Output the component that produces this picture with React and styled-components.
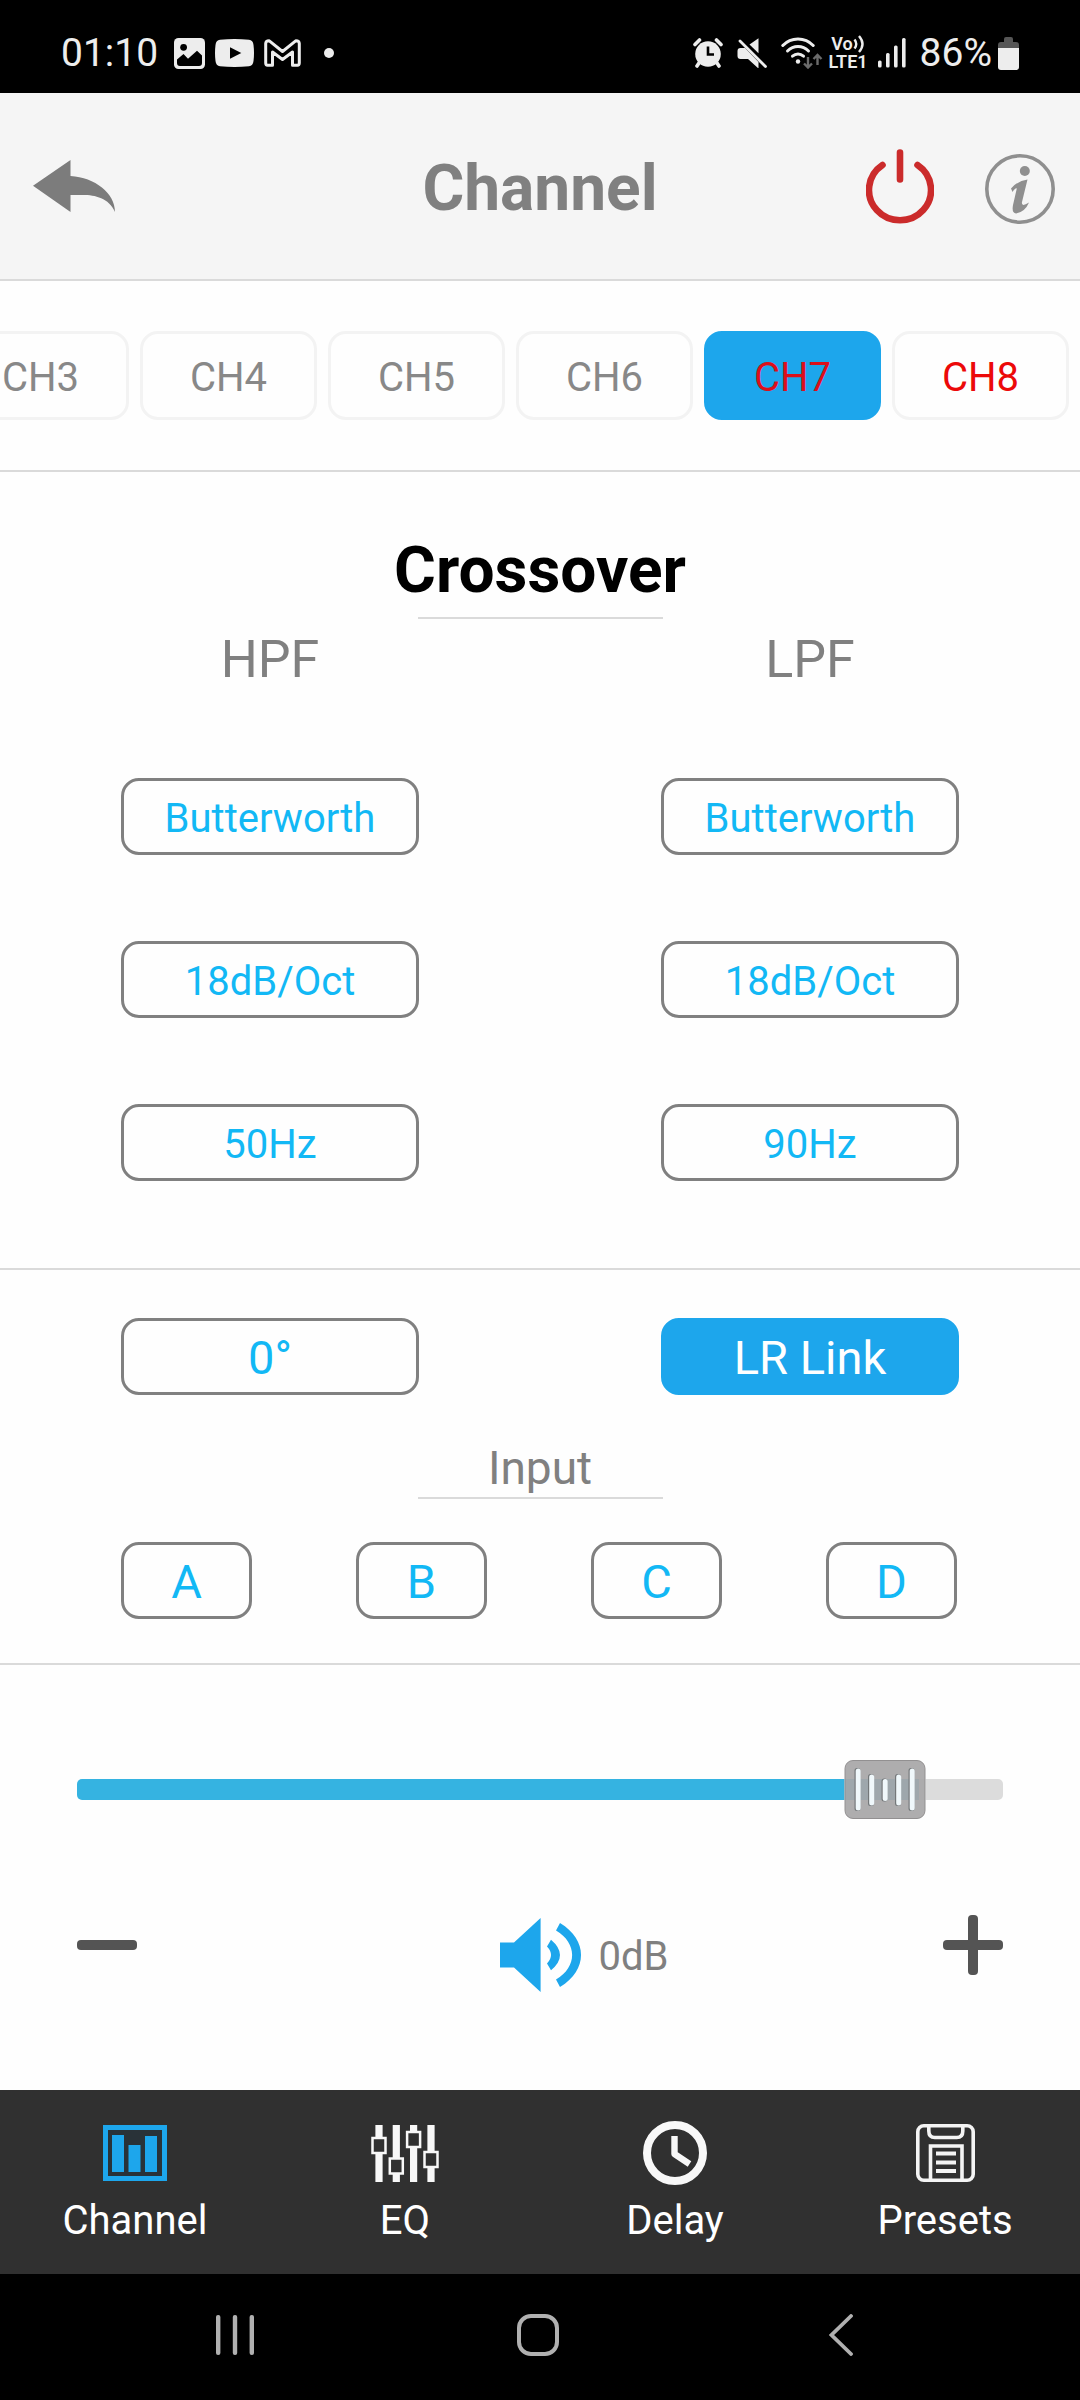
import React, { useState } from 'react';
import styled, { createGlobalStyle, css } from 'styled-components';

const GlobalStyle = createGlobalStyle`
  * {
    box-sizing: border-box;
  }
  body {
    margin: 0;
    background: #fefefe;
    font-family: Roboto, "Liberation Sans", sans-serif;
  }
  button {
    padding: 0;
    border: none;
    background: none;
    font-family: inherit;
    cursor: pointer;
  }
  svg {
    display: block;
    flex-shrink: 0;
  }
`;

const colors = {
  accent: '#1da6ec',
  link: '#12b8f5',
  track: '#35b3e1',
  grey: '#808080',
  line: '#dadada',
  status: '#ededed',
  bar: '#303030',
};

const Page = styled.div`
  display: flex;
  flex-direction: column;
  min-height: 100vh;
`;

const StatusBar = styled.div`
  display: flex;
  justify-content: space-between;
  padding: 13px 61px 0;
  height: 93px;
  background: #000;
  color: ${colors.status};
  font-size: 39px;
`;

const StatusGroup = styled.div`
  display: flex;
  align-items: center;
  gap: ${(props) => props.$gap};
`;

const VoLte = styled.div`
  display: flex;
  flex-direction: column;
  align-items: center;
  margin: 0 -4px 0 -9px;
  font-size: 18px;
  font-weight: 600;
  line-height: 18px;

  span {
    display: flex;
    align-items: center;
  }
`;

const Battery = styled.span`
  display: flex;
  align-items: center;
  gap: 6px;
`;

const Header = styled.header`
  display: grid;
  grid-template-columns: 1fr auto 1fr;
  align-items: center;
  padding: 0 25px;
  height: 188px;
  border-bottom: 2px solid ${colors.line};
  background: #f5f5f5;
`;

const Title = styled.h1`
  margin: 0;
  padding-top: 6px;
  color: ${colors.grey};
  font-size: 64px;
  line-height: 74px;
`;

const HeaderActions = styled.div`
  display: flex;
  align-items: center;
  justify-content: flex-end;
  gap: 51px;
`;

const IconButton = styled.button`
  display: flex;
`;

const BackButton = styled(IconButton)`
  padding-left: 8px;
`;

const ChannelTabs = styled.nav`
  display: flex;
  justify-content: flex-end;
  gap: 11px;
  padding: 50px 11px;
  overflow: hidden;
  border-bottom: 2px solid ${colors.line};
`;

const Tab = styled.button`
  flex: 0 0 177px;
  height: 89px;
  padding-top: 3px;
  border: 3px solid #f3f3f3;
  border-radius: 18px;
  color: ${(props) => (props.$linked ? '#ec0909' : '#888')};
  font-size: 40px;

  ${(props) =>
    props.$active &&
    css`
      border-color: ${colors.accent};
      background: ${colors.accent};
      color: #dc0f1b;
    `}
`;

const Section = styled.section`
  padding: ${(props) => props.$padding};
  border-bottom: 2px solid ${colors.line};
`;

const SectionTitle = styled.h2`
  display: flex;
  justify-content: center;
  width: 245px;
  margin: 0 auto;
  padding-bottom: 9px;
  border-bottom: 2px solid ${colors.line};
  color: #000;
  font-size: 64px;
  line-height: 74px;
`;

const InputTitle = styled(SectionTitle)`
  margin: 45px auto 43px;
  padding-bottom: 1px;
  color: ${colors.grey};
  font-size: 46px;
  font-weight: 400;
  line-height: 56px;
`;

const Columns = styled.div`
  display: grid;
  grid-template-columns: 1fr 1fr;
`;

const Filter = styled.div`
  display: flex;
  flex-direction: column;
  align-items: center;
  gap: 86px;
  padding-top: 8px;
`;

const FilterName = styled.h3`
  margin: 0;
  color: ${colors.grey};
  font-size: 52px;
  font-weight: 400;
  line-height: 65px;
`;

const Option = styled.button`
  width: 298px;
  height: 77px;
  padding-top: ${(props) => (props.$large ? '2px' : '4px')};
  justify-self: center;
  border: 3px solid ${colors.grey};
  border-radius: 18px;
  color: ${colors.link};
  font-size: ${(props) => (props.$large ? '47px' : '40px')};

  ${(props) =>
    props.$active &&
    css`
      border-color: ${colors.accent};
      background: ${colors.accent};
      color: #fff;
    `}
`;

const Inputs = styled.div`
  display: flex;
  justify-content: space-between;
  padding: 0 123px 0 121px;
`;

const InputOption = styled(Option)`
  width: 131px;
`;

const Volume = styled.section`
  flex: 1;
  padding: 95px 77px 80px;
`;

const SliderBox = styled.div`
  position: relative;
  height: 59px;
`;

const Range = styled.input`
  display: block;
  width: 100%;
  height: 59px;
  margin: 0;
  appearance: none;
  background: transparent;

  &::-webkit-slider-runnable-track {
    height: 21px;
    border-radius: 5px;
    background: linear-gradient(
      to right,
      ${colors.track} var(--filled),
      #dcdcdc var(--filled)
    );
  }
  &::-webkit-slider-thumb {
    appearance: none;
    width: 82px;
    height: 59px;
    margin-top: -19px;
    background: transparent;
  }
`;

const Knob = styled.svg`
  position: absolute;
  top: 0;
  pointer-events: none;
`;

const VolumeControls = styled.div`
  display: grid;
  grid-template-columns: 1fr auto 1fr;
  align-items: start;
  justify-items: start;
  margin-top: 96px;
`;

const SpeakerButton = styled(IconButton)`
  align-items: center;
  height: 80px;
`;

const LevelBox = styled.div`
  display: flex;
  align-items: flex-start;
  justify-content: space-between;
  justify-self: stretch;
  padding-left: 18px;
`;

const Level = styled.output`
  color: ${colors.grey};
  font-size: 40px;
  line-height: 84px;
`;

const TabBar = styled.nav`
  display: grid;
  grid-template-columns: repeat(4, 1fr);
  padding: 31px 0 29px;
  background: ${colors.bar};
`;

const TabLink = styled.a`
  display: flex;
  flex-direction: column;
  align-items: center;
  gap: 12px;
  color: #fff;
  font-size: 40px;
  line-height: 48px;
  text-decoration: none;
`;

const TabIcon = styled.span`
  display: flex;
  align-items: center;
  height: 64px;
`;

const SystemBar = styled.div`
  display: grid;
  grid-template-columns: repeat(3, 1fr);
  justify-items: center;
  padding: 0 88px 0 84px;
  height: 126px;
  background: #000;
`;

const SystemButton = styled(IconButton)`
  align-items: center;
  padding-bottom: 4px;
`;

const ImageIcon = () => (
  <svg width="31" height="31" viewBox="0 0 31 31">
    <rect width="31" height="31" rx="4.5" fill={colors.status} />
    <circle cx="9.6" cy="9.3" r="3.4" />
    <path d="M3 21.5L9.5 16l4.5 4.7 9-8 5 4.8V25a3 3 0 0 1-3 3H6a3 3 0 0 1-3-3z" />
  </svg>
);

const VideoIcon = () => (
  <svg width="39" height="28" viewBox="0 0 39 28">
    <path
      d="M5 .8Q19.5-.8 34 .8 38 1.2 38.5 6 39.5 14 38.5 22 38 26.8 34 27.2 19.5 28.8 5 27.2 1 26.8.5 22-.5 14 .5 6 1 1.2 5 .8z"
      fill={colors.status}
    />
    <path d="M15 8.3v11.4L26.3 14z" />
  </svg>
);

const MailIcon = () => (
  <svg width="37" height="28" viewBox="0 0 37 28">
    <path
      d="M3.5 26.2H8.5V13L18.5 20.5 28.5 13V26.2H33.5Q35.3 26.2 35.3 24V4.5Q35.3 1.7 32 1.7L18.5 12.5 5 1.7Q1.7 1.7 1.7 4.5V24Q1.7 26.2 3.5 26.2z"
      fill="none"
      stroke={colors.status}
      strokeWidth="3"
      strokeLinejoin="round"
    />
  </svg>
);

const DotIcon = () => (
  <svg width="10" height="10" viewBox="0 0 10 10">
    <circle cx="5" cy="5" r="5" fill={colors.status} />
  </svg>
);

const AlarmIcon = () => (
  <svg width="30" height="30" viewBox="0 0 30 30">
    <circle cx="15" cy="16" r="12.8" fill={colors.status} />
    <path
      d="M2 6.5L6.5 2M28 6.5L23.5 2M6 25l-2 3M24 25l2 3"
      stroke={colors.status}
      strokeWidth="3.6"
      strokeLinecap="round"
    />
    <path d="M15 8.5v8h6" fill="none" stroke="#000" strokeWidth="2.6" />
  </svg>
);

const MuteIcon = () => (
  <svg width="30" height="30" viewBox="0 0 30 30" fill={colors.status}>
    <path d="M.5 13q0-3 3-3H8l13.5 14v6.5L11 21H3.5q-3 0-3-3z" />
    <path d="M12.5 6.5L21.5.3v15z" />
    <path
      d="M3 3l25.5 25.5"
      stroke={colors.status}
      strokeWidth="2.8"
      strokeLinecap="round"
    />
  </svg>
);

const WifiIcon = () => (
  <svg width="42" height="32" viewBox="0 0 42 32" fill="none">
    <g stroke={colors.status} strokeWidth="3" strokeLinecap="round">
      <path d="M1.8 8.5Q8 2 17 2T32.2 8.5" />
      <path d="M6.5 14Q11 9.5 17 9.5T27.5 14" />
      <path d="M11.5 19.2Q14 17 17 17T22.5 19.2" />
    </g>
    <circle cx="17" cy="24.5" r="2.2" fill={colors.status} />
    <path
      d="M27 20v10M23 26.5l4 4 4-4M36.5 28V18M32.5 22l4-4 4 4"
      stroke="#6b6b6b"
      strokeWidth="2.4"
    />
  </svg>
);

const WaveIcon = () => (
  <svg width="12" height="18" viewBox="0 0 12 18" fill="none">
    <path
      d="M1.5 4.5q3.5 4.5 0 9M6 1q7 8 0 16"
      stroke={colors.status}
      strokeWidth="2.4"
    />
  </svg>
);

const SignalIcon = () => (
  <svg width="28" height="30" viewBox="0 0 28 30" fill={colors.status}>
    <rect x="0" y="22.5" width="3.6" height="7" rx="1.5" />
    <rect x="8" y="15" width="3.6" height="14.5" rx="1.5" />
    <rect x="16" y="7.5" width="3.6" height="22" rx="1.5" />
    <rect x="24" y="0" width="3.6" height="29.5" rx="1.5" />
  </svg>
);

const BatteryIcon = () => (
  <svg width="21" height="33" viewBox="0 0 21 33">
    <path
      d="M6 2q0-2 2-2h5q2 0 2 2v3h3q3 0 3 3v4H0V8q0-3 3-3h3z"
      fill="#565656"
    />
    <path d="M0 11h21v19q0 3-3 3H3q-3 0-3-3z" fill={colors.status} />
  </svg>
);

const BackIcon = () => (
  <svg width="82" height="52" viewBox="0 0 82 52">
    <path
      d="M0 25.8L37.5 0V16C62 17.5 82 33 82 52 76 38 62 35 50 35H37.5V52z"
      fill="#7c7c7c"
    />
  </svg>
);

const PowerIcon = () => (
  <svg width="68" height="75" viewBox="0 0 68 75" fill="none">
    <path
      d="M51.5 16A31 30.3 0 1 1 16.5 16M34 3.5V30.5"
      stroke="#cb2b2b"
      strokeWidth="6.6"
      strokeLinecap="round"
    />
  </svg>
);

const InfoIcon = () => (
  <svg width="70" height="76" viewBox="0 -6 70 76" fill="#8f8f8f">
    <circle
      cx="35"
      cy="35"
      r="33.2"
      fill="none"
      stroke="#8f8f8f"
      strokeWidth="3.6"
    />
    <circle cx="39.8" cy="17" r="5" />
    <path d="M26 34.5Q33 26.5 42.5 25.5L37 48Q36 53.5 44 48.5 40 58 31 59.5 26.5 59 28 51L31.8 34.5Q30.5 33.5 27.5 38z" />
  </svg>
);

const MinusIcon = () => (
  <svg width="60" height="60" viewBox="0 0 60 60" fill="#545454">
    <rect y="25" width="60" height="10" rx="4" />
  </svg>
);

const PlusIcon = () => (
  <svg width="60" height="60" viewBox="0 0 60 60" fill="#545454">
    <rect y="25" width="60" height="10" rx="4" />
    <rect x="25" width="10" height="60" rx="4" />
  </svg>
);

const SpeakerIcon = () => (
  <svg width="81" height="74" viewBox="0 0 81 74" fill={colors.accent}>
    <path d="M0 24.5H14L40.6 0V74L14 49.5H0z" />
    <path d="M51 21.7Q69 37 51 52.3L47 45.5Q55 37 47 28.5z" />
    <path d="M60 5C88 22 88 52 60 69L56 61.5C77.5 49 77.5 25 56 12.5z" />
  </svg>
);

const ChannelIcon = () => (
  <svg width="64" height="56" viewBox="0 0 64 56" fill={colors.accent}>
    <rect
      x="2.5"
      y="2.5"
      width="59"
      height="51"
      fill="#293238"
      stroke={colors.accent}
      strokeWidth="5"
    />
    <rect x="9" y="10" width="12" height="37" />
    <rect x="25.5" y="20" width="12" height="27" />
    <rect x="42" y="11" width="12" height="36" />
  </svg>
);

const EqIcon = () => (
  <svg width="68" height="57" viewBox="0 0 68 57">
    {[
      [8, 13],
      [25.3, 33.5],
      [42.6, 7],
      [60, 27],
    ].map(([x, y]) => (
      <g key={x}>
        <rect x={x - 3.6} width="7.2" height="57" fill="#f8f8f8" />
        <rect
          x={x - 6.5}
          y={y}
          width="13"
          height="15"
          fill={colors.bar}
          stroke="#f8f8f8"
          strokeWidth="2.5"
        />
      </g>
    ))}
  </svg>
);

const ClockIcon = () => (
  <svg width="64" height="64" viewBox="0 0 64 64" fill="none" stroke="#f8f8f8">
    <circle cx="32" cy="32" r="28" strokeWidth="8" />
    <path d="M31.5 15V33L46.5 43" strokeWidth="6.4" strokeLinejoin="round" />
  </svg>
);

const PresetIcon = () => (
  <svg
    width="59"
    height="58"
    viewBox="0 0 59 58"
    fill="none"
    stroke="#f4f4f4"
    strokeWidth="3.6"
  >
    <rect x="1.8" y="1.8" width="55.4" height="54.4" rx="6" />
    <path d="M12.8 3v4q0 6.5 6 6.5h22q6 0 6-6.5V3" />
    <path d="M14.5 56V22H46V56" />
    <path d="M20 29.5H40M20 38.5H40M20 47H40" strokeWidth="4" />
  </svg>
);

const RecentsIcon = () => (
  <svg width="38" height="40" viewBox="0 0 38 40" fill="#b0b0b0">
    <rect x="0" width="4.4" height="40" rx="2" />
    <rect x="16.8" width="4.4" height="40" rx="2" />
    <rect x="33.6" width="4.4" height="40" rx="2" />
  </svg>
);

const HomeIcon = () => (
  <svg width="42" height="42" viewBox="0 0 42 42" fill="none">
    <rect
      x="2"
      y="2"
      width="38"
      height="38"
      rx="12"
      stroke="#b0b0b0"
      strokeWidth="4"
    />
  </svg>
);

const ChevronIcon = () => (
  <svg width="24" height="42" viewBox="0 0 24 42" fill="none">
    <path
      d="M22 2L2.5 21 22 40"
      stroke="#b0b0b0"
      strokeWidth="3.8"
      strokeLinecap="round"
    />
  </svg>
);

const MIN_DB = -60;
const MAX_DB = 6;
const KNOB_WIDTH = 82;

const knobSlots = [
  [14, 8.5, 42],
  [27.5, 14.5, 31],
  [41, 19, 22],
  [54.5, 14.5, 31],
  [68, 8.5, 42],
];

function VolumeSlider({ value, onChange }) {
  const ratio = (value - MIN_DB) / (MAX_DB - MIN_DB);

  return (
    <SliderBox>
      <Range
        type="range"
        aria-label="Volume"
        min={MIN_DB}
        max={MAX_DB}
        value={value}
        onChange={(e) => onChange(Number(e.target.value))}
        style={{ '--filled': `${ratio * 100}%` }}
      />
      <Knob
        width={KNOB_WIDTH}
        height="59"
        viewBox="0 0 82 59"
        style={{ left: `calc((100% - ${KNOB_WIDTH}px) * ${ratio})` }}
      >
        <rect width="82" height="59" rx="9" fill="#fff" fillOpacity="0.5" />
        <rect
          x="1"
          y="0.5"
          width="80"
          height="58"
          rx="8"
          fill="#9f9d9e"
          fillOpacity="0.84"
          stroke="#929091"
        />
        {knobSlots.map(([x, y, height]) => (
          <g key={x}>
            <rect
              x={x - 3.5}
              y={y - 0.5}
              width="6"
              height={height + 1}
              rx="2.5"
              fill="#74787a"
            />
            <rect
              x={x - 2.3}
              y={y}
              width="5"
              height={height}
              rx="2.5"
              fill="#f0f8fb"
            />
          </g>
        ))}
      </Knob>
    </SliderBox>
  );
}

const channels = [
  { name: 'CH3' },
  { name: 'CH4' },
  { name: 'CH5' },
  { name: 'CH6' },
  { name: 'CH7', linked: true },
  { name: 'CH8', linked: true },
];

const filters = [
  { name: 'HPF', options: ['Butterworth', '18dB/Oct', '50Hz'] },
  { name: 'LPF', options: ['Butterworth', '18dB/Oct', '90Hz'] },
];

const pages = [
  { name: 'Channel', Icon: ChannelIcon },
  { name: 'EQ', Icon: EqIcon },
  { name: 'Delay', Icon: ClockIcon },
  { name: 'Presets', Icon: PresetIcon },
];

function App() {
  const [channel, setChannel] = useState('CH7');
  const [linked, setLinked] = useState(true);
  const [level, setLevel] = useState(0);

  return (
    <Page>
      <GlobalStyle />
      <StatusBar>
        <StatusGroup $gap="16px">
          <span>01:10</span>
          <StatusGroup $gap="10px">
            <ImageIcon />
            <VideoIcon />
            <MailIcon />
          </StatusGroup>
          <StatusGroup $gap="7px">
            <span />
            <DotIcon />
          </StatusGroup>
        </StatusGroup>
        <StatusGroup $gap="14px">
          <AlarmIcon />
          <MuteIcon />
          <WifiIcon />
          <VoLte>
            <span>
              Vo
              <WaveIcon />
            </span>
            <span>LTE1</span>
          </VoLte>
          <SignalIcon />
          <Battery>
            86%
            <BatteryIcon />
          </Battery>
        </StatusGroup>
      </StatusBar>

      <Header>
        <BackButton aria-label="Back">
          <BackIcon />
        </BackButton>
        <Title>Channel</Title>
        <HeaderActions>
          <IconButton aria-label="Power">
            <PowerIcon />
          </IconButton>
          <IconButton aria-label="Info">
            <InfoIcon />
          </IconButton>
        </HeaderActions>
      </Header>

      <ChannelTabs>
        {channels.map(({ name, linked: isLinked }) => (
          <Tab
            key={name}
            $linked={isLinked}
            $active={name === channel}
            onClick={() => setChannel(name)}
          >
            {name}
          </Tab>
        ))}
      </ChannelTabs>

      <Section $padding="62px 0 87px">
        <SectionTitle>Crossover</SectionTitle>
        <Columns>
          {filters.map(({ name, options }) => (
            <Filter key={name}>
              <FilterName>{name}</FilterName>
              {options.map((option) => (
                <Option key={option}>{option}</Option>
              ))}
            </Filter>
          ))}
        </Columns>
      </Section>

      <Section $padding="48px 0 44px">
        <Columns>
          <Option $large>0°</Option>
          <Option $large $active={linked} onClick={() => setLinked(!linked)}>
            LR Link
          </Option>
        </Columns>
        <InputTitle>Input</InputTitle>
        <Inputs>
          {['A', 'B', 'C', 'D'].map((name) => (
            <InputOption key={name} $large>
              {name}
            </InputOption>
          ))}
        </Inputs>
      </Section>

      <Volume>
        <VolumeSlider value={level} onChange={setLevel} />
        <VolumeControls>
          <IconButton
            aria-label="Volume down"
            onClick={() => setLevel(Math.max(MIN_DB, level - 1))}
          >
            <MinusIcon />
          </IconButton>
          <SpeakerButton aria-label="Mute">
            <SpeakerIcon />
          </SpeakerButton>
          <LevelBox>
            <Level>{level}dB</Level>
            <IconButton
              aria-label="Volume up"
              onClick={() => setLevel(Math.min(MAX_DB, level + 1))}
            >
              <PlusIcon />
            </IconButton>
          </LevelBox>
        </VolumeControls>
      </Volume>

      <TabBar>
        {pages.map(({ name, Icon }) => (
          <TabLink key={name} href={`#${name.toLowerCase()}`}>
            <TabIcon>
              <Icon />
            </TabIcon>
            {name}
          </TabLink>
        ))}
      </TabBar>

      <SystemBar>
        <SystemButton aria-label="Recent apps">
          <RecentsIcon />
        </SystemButton>
        <SystemButton aria-label="Home">
          <HomeIcon />
        </SystemButton>
        <SystemButton aria-label="Go back">
          <ChevronIcon />
        </SystemButton>
      </SystemBar>
    </Page>
  );
}

export default App;
